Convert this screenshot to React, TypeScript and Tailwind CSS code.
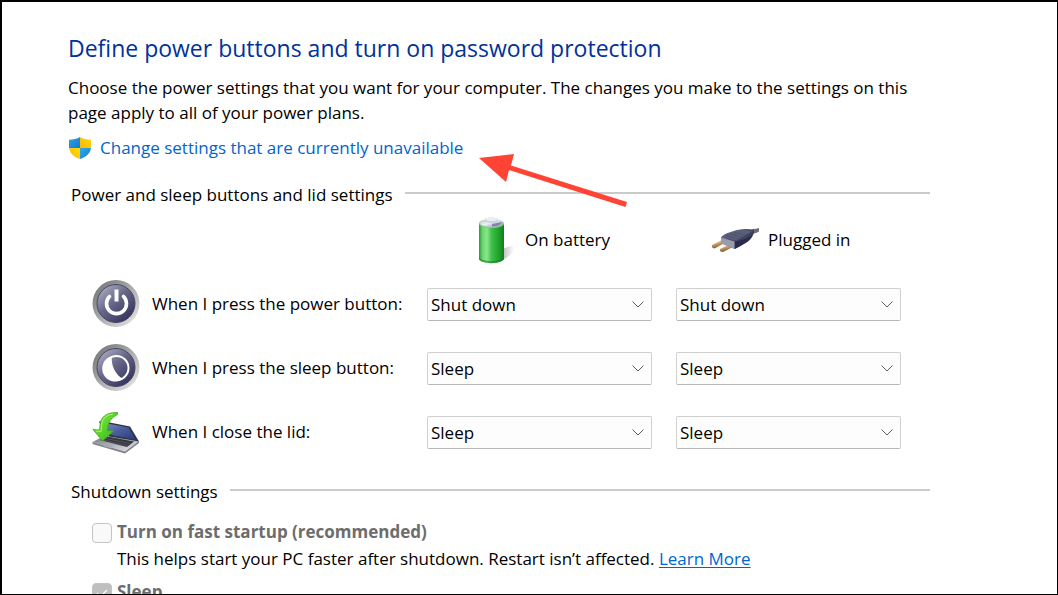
import { useState } from "react";
import type { ReactNode } from "react";

type PowerAction = "Do nothing" | "Sleep" | "Hibernate" | "Shut down";

interface PowerSetting {
  id: string;
  label: string;
  icon: ReactNode;
  battery: PowerAction;
  plugged: PowerAction;
}

const ACTIONS: PowerAction[] = ["Do nothing", "Sleep", "Hibernate", "Shut down"];

function ShieldIcon() {
  return (
    <svg viewBox="0 0 24 24" className="size-6 shrink-0" aria-hidden="true">
      <defs>
        <linearGradient id="shield-blue" x1="0" y1="0" x2="1" y2="1">
          <stop offset="0" stopColor="#35a9e6" />
          <stop offset="1" stopColor="#0f78cf" />
        </linearGradient>
        <linearGradient id="shield-gold" x1="1" y1="0" x2="0" y2="1">
          <stop offset="0" stopColor="#ffdc0a" />
          <stop offset="1" stopColor="#fbb604" />
        </linearGradient>
        <clipPath id="shield-shape">
          <path d="M12 1C9.500 2.800 5 3.600 1 3.700V11C1 17 6 21 12 23C18 21 23 17 23 11V3.700C19 3.600 14.500 2.800 12 1Z" />
        </clipPath>
      </defs>
      <g clipPath="url(#shield-shape)">
        <rect width="12" height="12" fill="url(#shield-blue)" />
        <rect x="12" width="12" height="12" fill="url(#shield-gold)" />
        <rect y="12" width="12" height="12" fill="url(#shield-gold)" />
        <rect x="12" y="12" width="12" height="12" fill="url(#shield-blue)" />
      </g>
    </svg>
  );
}

function BatteryIcon() {
  return (
    <svg viewBox="0 0 48 48" className="size-12 shrink-0" aria-hidden="true">
      <defs>
        <linearGradient id="battery-body" x1="0" x2="1">
          <stop offset="0" stopColor="#2c9a35" />
          <stop offset="0.15" stopColor="#6ed873" />
          <stop offset="0.32" stopColor="#8be58d" />
          <stop offset="0.5" stopColor="#3fc04a" />
          <stop offset="0.78" stopColor="#1fa42c" />
          <stop offset="1" stopColor="#157a20" />
        </linearGradient>
        <linearGradient id="battery-top" x1="0" x2="1" y2="1">
          <stop offset="0" stopColor="#b9bdc8" />
          <stop offset="0.45" stopColor="#f0f1f7" />
          <stop offset="1" stopColor="#7d819c" />
        </linearGradient>
        <linearGradient id="battery-shadow" x1="0" x2="1">
          <stop offset="0" stopColor="#666" stopOpacity="0.8" />
          <stop offset="1" stopColor="#999" stopOpacity="0" />
        </linearGradient>
      </defs>
      <path d="M30 34L43 30Q49 31 45 36Q39 43 28 47Z" fill="url(#battery-shadow)" />
      <path d="M11 8V43C13 48.500 33 48.500 36 43V8Z" fill="url(#battery-body)" />
      <path d="M11 41C13 46.500 33 46.500 36 41V43C33 48.500 13 48.500 11 43Z" fill="#188025" opacity="0.6" />
      <ellipse cx="23.500" cy="7.500" rx="12.500" ry="4.500" fill="#8ecb96" />
      <ellipse cx="23.500" cy="7" rx="11.500" ry="4" fill="url(#battery-top)" />
      <path d="M17 5V3C18 1 29 1 30 3V5C28 7.500 19 7.500 17 5Z" fill="#cfd2dc" />
      <ellipse cx="23.500" cy="3.200" rx="6" ry="1.700" fill="#eceef4" />
      <path d="M24 8L34 6Q32 10 24 10.500Z" fill="#7378a0" opacity="0.8" />
    </svg>
  );
}

function PlugIcon() {
  return (
    <svg viewBox="0 0 48 48" className="size-12 shrink-0" aria-hidden="true">
      <defs>
        <linearGradient id="plug-body" x1="0" y1="0" x2="1" y2="1">
          <stop offset="0" stopColor="#777b92" />
          <stop offset="0.45" stopColor="#474b68" />
          <stop offset="1" stopColor="#222542" />
        </linearGradient>
        <linearGradient id="plug-pin" x1="0" y1="0" x2="0.4" y2="1">
          <stop offset="0" stopColor="#fae6c2" />
          <stop offset="0.55" stopColor="#d2a068" />
          <stop offset="1" stopColor="#6b4930" />
        </linearGradient>
      </defs>
      <path d="M39 15Q42 12 44 13L48 12V15.500L45 17L41 18Z" fill="#6c7073" />
      <path d="M1 29L13 23L15.500 26L3.500 32.500Q0 32 1 29Z" fill="url(#plug-pin)" />
      <path d="M9 33L21 27L24 30L12 36Q8 36 9 33Z" fill="url(#plug-pin)" />
      <path d="M10 21.500Q12 18.500 18 16.500L26 14Q36 12 43 14V17Q40 25 33 28L24 33L10 27Z" fill="url(#plug-body)" />
      <path d="M10 21.500L23.500 25.500V33L10 27.500Z" fill="#9a9cad" />
      <path d="M11.500 20.500L25 24.500L41 15.500Q33 13 24 15Z" fill="#5b5f79" />
      <path d="M15 19.500L27 23M19 18L31 21M23 16.500L35 19" stroke="#464a66" strokeWidth="0.700" />
      <path d="M24 25.500V32.500Q37 27 42 18Q35 24 24 25.500Z" fill="#292b4c" />
    </svg>
  );
}

function RoundButton({ id, children }: { id: string; children: ReactNode }) {
  return (
    <svg viewBox="0 0 48 48" className="size-12 shrink-0" aria-hidden="true">
      <defs>
        <linearGradient id={`${id}-rim`} x1="0.1" y1="0.1" x2="0.85" y2="0.85">
          <stop offset="0" stopColor="#777879" />
          <stop offset="0.5" stopColor="#a7a8aa" />
          <stop offset="1" stopColor="#d9d9da" />
        </linearGradient>
        <linearGradient id={`${id}-face`} x1="0.1" y1="0.1" x2="0.8" y2="0.9">
          <stop offset="0" stopColor="#aaa9bf" />
          <stop offset="0.45" stopColor="#696889" />
          <stop offset="1" stopColor="#37365f" />
        </linearGradient>
      </defs>
      <circle cx="24" cy="23.500" r="23.500" fill={`url(#${id}-rim)`} />
      <circle cx="24" cy="23.500" r="19" fill={`url(#${id}-face)`} stroke="#48475f" strokeWidth="1" />
      {children}
    </svg>
  );
}

function PowerIcon() {
  return (
    <RoundButton id="power">
      <path
        d="M17.500 16.500A10 10 0 1 0 31.500 16.500"
        fill="none"
        stroke="#fff"
        strokeWidth="3.600"
        strokeLinecap="round"
      />
      <path d="M24.500 9.500V21.500" stroke="#fff" strokeWidth="4" />
    </RoundButton>
  );
}

function SleepIcon() {
  return (
    <RoundButton id="sleep">
      <circle cx="24.500" cy="24" r="12" fill="none" stroke="#fff" strokeWidth="2" />
      <path d="M20 12A13 13 0 1 0 31 35C24 31 18.500 22 20 12Z" fill="#fff" />
    </RoundButton>
  );
}

function LidIcon() {
  return (
    <svg viewBox="0 0 48 48" className="size-12 shrink-0" aria-hidden="true">
      <defs>
        <linearGradient id="lid-screen" x1="0" y1="0" x2="1" y2="1">
          <stop offset="0" stopColor="#8090c5" />
          <stop offset="0.5" stopColor="#495d9f" />
          <stop offset="1" stopColor="#283b7c" />
        </linearGradient>
        <linearGradient id="lid-base" x1="0" y1="0" x2="1" y2="1">
          <stop offset="0" stopColor="#777a80" />
          <stop offset="1" stopColor="#e9eaf0" />
        </linearGradient>
        <linearGradient id="lid-arrow" x1="0" y1="0" x2="1" y2="1">
          <stop offset="0" stopColor="#8bed43" />
          <stop offset="1" stopColor="#2fb714" />
        </linearGradient>
      </defs>
      <path d="M0.500 34L12 28L47 33L33 43.500Z" fill="url(#lid-base)" />
      <path d="M0.500 34L33 43.500L47 33V35L33 45.500L0.500 36Z" fill="#80838c" />
      <path d="M8 32L15 28.500L42 33.500L35 39Z" fill="#34373e" />
      <path d="M11 32L36 37.500M14 30.500L38 35.500" stroke="#5f626a" strokeWidth="0.700" />
      <path d="M14 36L21.500 38L18.500 40L10.500 38Z" fill="#a9abb4" />
      <path d="M7 14Q8 12.500 10 13L38 18.500L47 33.500L17 28.500Z" fill="#303440" />
      <path d="M10 14.500L36.500 19.500L43.500 31.500L19 27Z" fill="url(#lid-screen)" />
      <path
        d="M25.500 4.500Q12 4 8.500 13.500L7.500 22L1 21.500L10.500 33L21.500 23L15.500 22.500Q15.500 11 25.500 6.500Z"
        fill="url(#lid-arrow)"
        stroke="#3aa822"
        strokeWidth="0.800"
      />
      <path d="M21 6Q12 7 10 14.500L9 23.500L4 23" fill="none" stroke="#b4f780" strokeWidth="0.900" />
    </svg>
  );
}

// Red pointer laid over the page, aimed at the settings link.
function PointerArrow() {
  return (
    <svg
      viewBox="0 0 150 72"
      className="pointer-events-none absolute top-0 left-full ml-4 h-[72px] w-[150px] max-w-none"
      aria-hidden="true"
    >
      <path d="M0 22L35 18L32 29.500L148 66L146.500 71L30 34L27 46Z" fill="#ff4335" />
    </svg>
  );
}

const SETTINGS: PowerSetting[] = [
  {
    id: "power-button",
    label: "When I press the power button:",
    icon: <PowerIcon />,
    battery: "Shut down",
    plugged: "Shut down",
  },
  {
    id: "sleep-button",
    label: "When I press the sleep button:",
    icon: <SleepIcon />,
    battery: "Sleep",
    plugged: "Sleep",
  },
  {
    id: "lid",
    label: "When I close the lid:",
    icon: <LidIcon />,
    battery: "Sleep",
    plugged: "Sleep",
  },
];

function SectionTitle({ children }: { children: ReactNode }) {
  return (
    <div className="flex items-center gap-3 pl-[3px]">
      <h2 className="leading-6">{children}</h2>
      <div className="mb-1 h-0.5 flex-1 bg-[#cbcbcb]" />
    </div>
  );
}

interface ActionSelectProps {
  label: string;
  initial: PowerAction;
}

function ActionSelect({ label, initial }: ActionSelectProps) {
  const [value, setValue] = useState<PowerAction>(initial);

  return (
    <div className="relative">
      <select
        aria-label={label}
        value={value}
        onChange={(e) => setValue(e.target.value as PowerAction)}
        className="block h-[33px] w-full appearance-none rounded-xs border border-[#d0d0d0] border-b-[#b9b9b9] bg-[#fdfdfd] pt-0.5 pr-8 pl-[3px] text-black"
      >
        {ACTIONS.map((action) => (
          <option key={action}>{action}</option>
        ))}
      </select>
      <svg
        viewBox="0 0 12 7"
        className="pointer-events-none absolute top-[13px] right-2 h-[7px] w-3"
        fill="none"
        stroke="#5c5c5c"
        aria-hidden="true"
      >
        <path d="M0.500 0.500L6 6L11.500 0.500" />
      </svg>
    </div>
  );
}

interface ShutdownOptionProps {
  id: string;
  label: string;
  checked: boolean;
  children?: ReactNode;
}

function ShutdownOption({ id, label, checked, children }: ShutdownOptionProps) {
  return (
    <div className="flex items-start gap-[5px]">
      <div className="relative mt-[3px] size-5 shrink-0">
        <input
          id={id}
          type="checkbox"
          checked={checked}
          disabled
          readOnly
          className="block size-5 appearance-none rounded-sm border border-[#c4c4c4] bg-[#f9f9f9] checked:bg-[#bfbfbf]"
        />
        {checked ? (
          <svg
            viewBox="0 0 20 20"
            className="pointer-events-none absolute inset-0 size-5"
            fill="none"
            stroke="#fff"
            strokeWidth="1.200"
            aria-hidden="true"
          >
            <path d="M5 10L8.500 13.500L15 7" />
          </svg>
        ) : null}
      </div>
      <div>
        <label htmlFor={id} className="block leading-6 font-bold text-[#6d6d6d]">
          {label}
        </label>
        {children}
      </div>
    </div>
  );
}

export default function App() {
  return (
    <div className="h-screen overflow-hidden border-t-2 border-r border-b border-l-2 border-black bg-white font-['Open_Sans','Noto_Sans',sans-serif] text-[17px] text-black">
      <main className="pt-[30px] pr-[127px] pl-[66px]">
        <h1 className="text-[23px] leading-8 text-[#003399]">
          Define power buttons and turn on password protection
        </h1>
        <p className="mt-[11px] leading-[25px]">
          Choose the power settings that you want for your computer. The changes you make to the
          settings on this page apply to all of your power plans.
        </p>
        <div className="relative mt-[11px] flex w-fit items-center gap-2">
          <ShieldIcon />
          <a href="#unlock" className="leading-6 text-[#0066cc]">
            Change settings that are currently unavailable
          </a>
          <PointerArrow />
        </div>

        <section className="mt-[23px]">
          <SectionTitle>Power and sleep buttons and lid settings</SectionTitle>
          <div className="mt-[9px] mr-[29px] ml-6 grid grid-cols-[minmax(0,1fr)_225px_225px] items-center gap-x-6 gap-y-4">
            <div />
            <div className="flex items-center gap-[9px] pl-[41px]">
              <BatteryIcon />
              <span>On battery</span>
            </div>
            <div className="flex items-center gap-[9px] pl-[35px]">
              <PlugIcon />
              <span>Plugged in</span>
            </div>
            {SETTINGS.map((setting) => (
              <div key={setting.id} className="contents">
                <div className="flex items-center gap-3 whitespace-nowrap">
                  {setting.icon}
                  <span>{setting.label}</span>
                </div>
                <ActionSelect label={`${setting.label} On battery`} initial={setting.battery} />
                <ActionSelect label={`${setting.label} Plugged in`} initial={setting.plugged} />
              </div>
            ))}
          </div>
        </section>

        <section className="mt-6">
          <SectionTitle>Shutdown settings</SectionTitle>
          <div className="mt-4 ml-6 flex flex-col gap-[9px]">
            <ShutdownOption id="fast-startup" label="Turn on fast startup (recommended)" checked={false}>
              <p className="mt-[3px] leading-6">
                This helps start your PC faster after shutdown. Restart isn’t affected.{" "}
                <a href="#learn-more" className="text-[#0066cc] underline underline-offset-2">
                  Learn More
                </a>
              </p>
            </ShutdownOption>
            <ShutdownOption id="sleep" label="Sleep" checked />
          </div>
        </section>
      </main>
    </div>
  );
}
